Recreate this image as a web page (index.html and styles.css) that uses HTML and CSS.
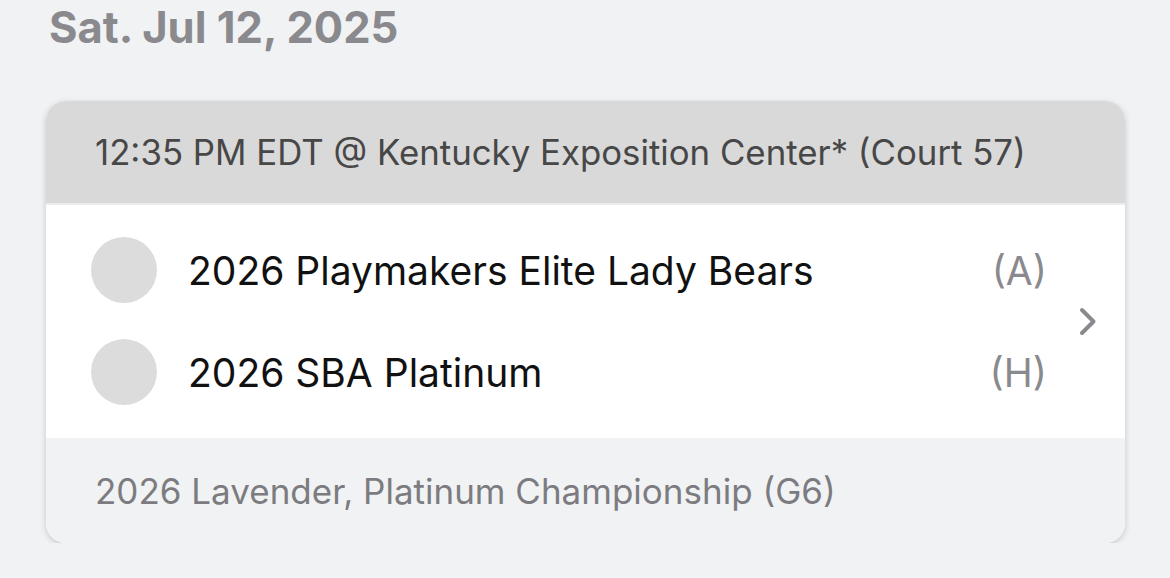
FILE: index.html
```html
<!DOCTYPE html>
<html>
<head>
<meta charset="utf-8">
<link rel="stylesheet" href="styles.css">
</head>
<body>
<div class="page">
  <h1 class="date">Sat. Jul 12, 2025</h1>
  <div class="card">
    <div class="card-head">12:35 PM EDT @ Kentucky Exposition Center* (Court 57)</div>
    <div class="card-body">
      <div class="teams">
        <div class="team">
          <span class="avatar"></span>
          <span class="name">2026 Playmakers Elite Lady Bears</span>
          <span class="tag">(A)</span>
        </div>
        <div class="team">
          <span class="avatar"></span>
          <span class="name">2026 SBA Platinum</span>
          <span class="tag">(H)</span>
        </div>
      </div>
      <div class="chevron">
        <svg width="18" height="29" viewBox="0 0 18 29"><polyline points="3,3 14.5,14.5 3,26" fill="none" stroke="#8a8a8e" stroke-width="4" stroke-linecap="round" stroke-linejoin="round"/></svg>
      </div>
    </div>
    <div class="card-foot">2026 Lavender, Platinum Championship (G6)</div>
  </div>
</div>
</body>
</html>
```
FILE: styles.css
```css
html, body {
  margin: 0;
  padding: 0;
  background: #f1f2f4;
  font-family: "Inter", "Noto Sans", sans-serif;
}
.page {
  padding: 0 45px 0 46px;
}
.date {
  margin: 0;
  padding: 2px 0 0 3px;
  font-size: 43.5px;
  line-height: 50px;
  font-weight: 700;
  color: #8a8a8e;
}
.card {
  margin-top: 49px;
  border-radius: 20px;
  overflow: hidden;
  box-shadow: 0 2px 6px rgba(0, 0, 0, 0.18);
  background: #fff;
}
.card-head {
  height: 102px;
  background: #d9d9d9;
  border-bottom: 2px solid #ededed;
  display: flex;
  align-items: center;
  padding-left: 49px;
  font-size: 34.8px;
  color: #474747;
}
.card-body {
  display: flex;
  align-items: center;
  padding: 14px 0 15px 45px;
  background: #fff;
}
.teams {
  flex: 1;
  display: flex;
  flex-direction: column;
}
.team {
  height: 102px;
  display: flex;
  align-items: center;
}
.avatar {
  width: 66px;
  height: 66px;
  border-radius: 50%;
  background: #dcdcdc;
  flex: none;
}
.name {
  flex: 1;
  margin-left: 31px;
  font-size: 39px;
  color: #111;
}
.tag {
  font-size: 39px;
  color: #8a8a8e;
}
.chevron {
  width: 78px;
  display: flex;
  justify-content: center;
  padding-left: 4px;
  box-sizing: border-box;
}
.card-foot {
  height: 105px;
  background: #f1f2f4;
  display: flex;
  align-items: center;
  padding-left: 49px;
  font-size: 35px;
  color: #7c7c80;
}
```
